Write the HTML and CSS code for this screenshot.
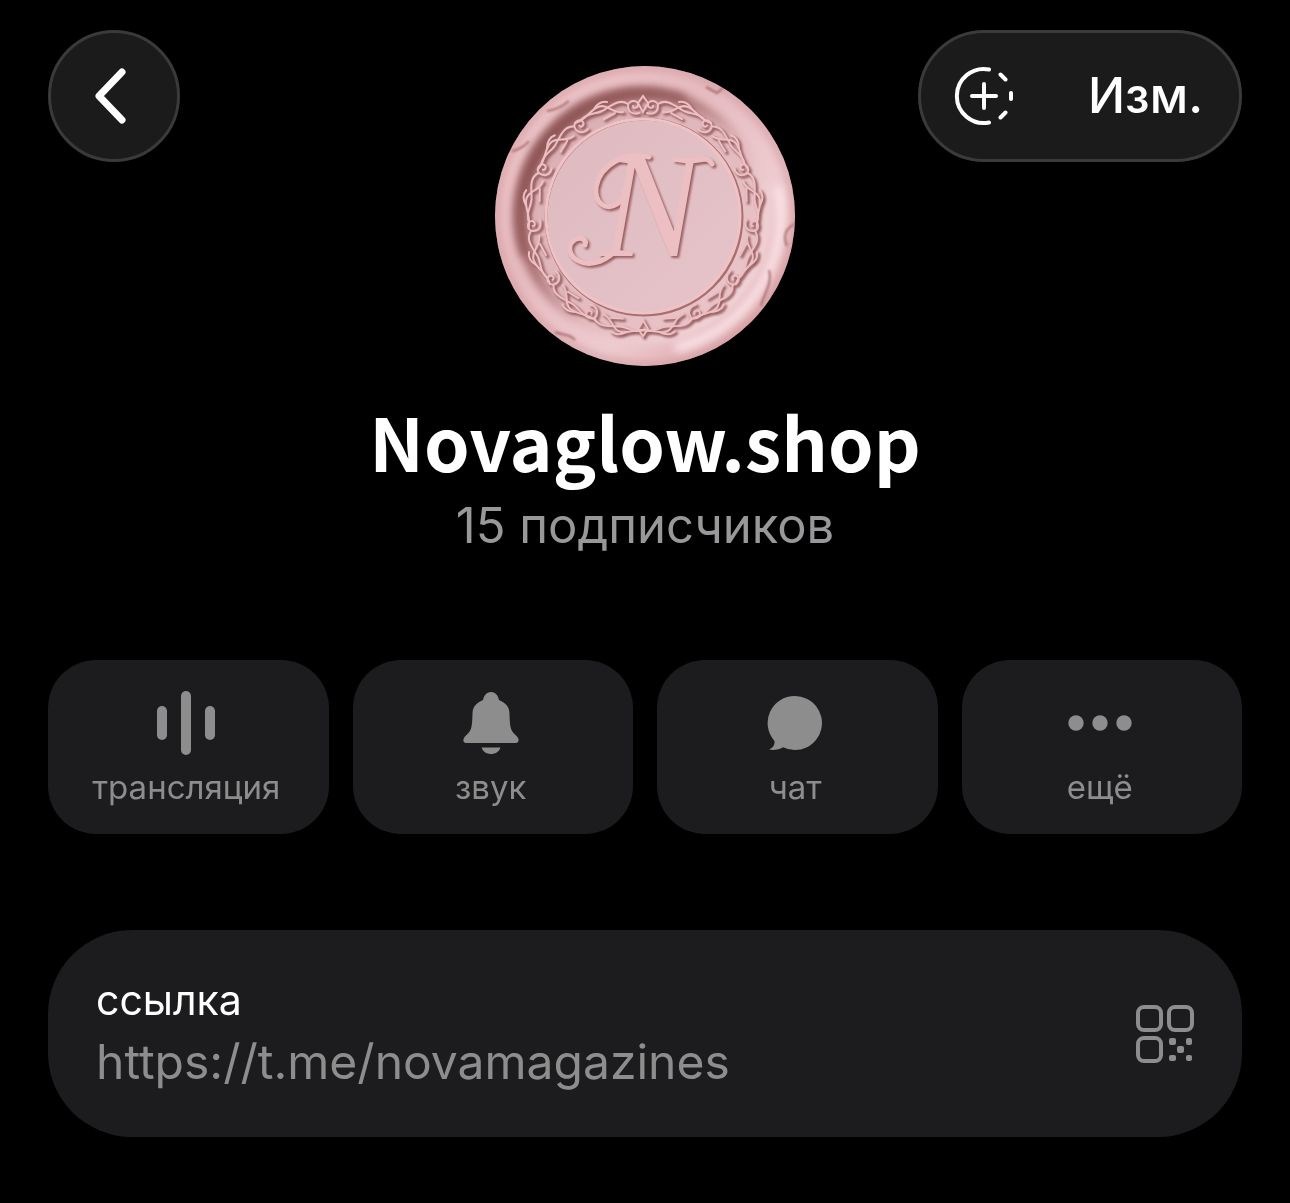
FILE: index.html
```
<!DOCTYPE html>
<html lang="ru">
	<head>
		<meta charset="UTF-8">
		<meta name="viewport" content="width=device-width, initial-scale=1">
		<title>Novaglow.shop</title>
		<link rel="stylesheet" href="styles.css">
	</head>
	<body>
		<div class="profile">
			<header class="top">
				<button type="button" class="back" aria-label="Назад">
					<svg width="60" height="60" viewBox="0 0 60 60">
						<path d="M38 6L15 30L38 54"/>
					</svg>
				</button>
				<!--аватар: сургучная печать-->
				<svg class="avatar" viewBox="0 0 300 300" role="img" aria-label="Novaglow">
					<defs>
						<linearGradient id="rim" x1="0.1" y1="0.1" x2="0.9" y2="0.9">
							<stop offset="0" stop-color="#eec6ca"/>
							<stop offset="0.35" stop-color="#e6bbc0"/>
							<stop offset="0.7" stop-color="#eecbd0"/>
							<stop offset="1" stop-color="#dba5aa"/>
						</linearGradient>
						<linearGradient id="groove" x1="0.1" y1="0.15" x2="0.9" y2="0.85">
							<stop offset="0" stop-color="#8a5050"/>
							<stop offset="0.35" stop-color="#a96f70"/>
							<stop offset="0.6" stop-color="#e2b8bc"/>
							<stop offset="1" stop-color="#fdeced"/>
						</linearGradient>
						<linearGradient id="plate" x1="0" y1="0" x2="1" y2="1">
							<stop offset="0" stop-color="#d9abb0"/>
							<stop offset="1" stop-color="#ebc9cd"/>
						</linearGradient>
						<linearGradient id="disc" x1="0" y1="0" x2="1" y2="1">
							<stop offset="0" stop-color="#debabf"/>
							<stop offset="1" stop-color="#e6c4c9"/>
						</linearGradient>
						<filter id="soft" x="-20%" y="-20%" width="140%" height="140%">
							<feGaussianBlur stdDeviation="4"/>
						</filter>
						<filter id="soft2" x="-20%" y="-20%" width="140%" height="140%">
							<feGaussianBlur stdDeviation="1"/>
						</filter>
						<clipPath id="round"><circle cx="150" cy="150" r="150"/></clipPath>
						<g id="vine">
							<path d="M144 47C138 49 133 46 133 40C133 34 143 33 143 39C143 42 138 43 138 40"/>
							<path d="M133 38C124 32 116 40 107 45C99 49 93 46 86 54"/>
							<path d="M128 46C118 48 112 37 103 41C94 45 91 54 80 57"/>
							<path d="M112 36C106 35 102 38 99 43M120 47L109 53"/>
						</g>
						<g id="half">
							<use href="#vine"/>
							<use href="#vine" transform="rotate(-30 148 150)"/>
							<use href="#vine" transform="rotate(-60 148 150)"/>
							<use href="#vine" transform="rotate(-90 148 150)"/>
							<use href="#vine" transform="rotate(-120 148 150)"/>
							<use href="#vine" transform="rotate(-147 148 150)"/>
						</g>
						<g id="wreath">
							<use href="#half"/>
							<use href="#half" transform="translate(296 0) scale(-1 1)"/>
							<path d="M143 37L148 30L153 37L148 46ZM143 263L148 270L153 263L148 254Z"/>
						</g>
						<g id="swash">
							<path d="M154 91C130 85 105 99 101 121C99 138 112 145 122 138C128 134 130 129 129 124"/>
							<path d="M123 182C112 195 98 200 86 196C73 191 71 178 81 173C87 171 92 174 90 179"/>
							<path d="M200 94C207 91 214 92 217 98"/>
						</g>
					</defs>
					<g clip-path="url(#round)">
						<rect width="300" height="300" fill="url(#rim)"/>
						<circle cx="150" cy="150" r="149" class="edge" filter="url(#soft)"/>
						<path class="glow" d="M283 120A137 137 0 0 1 180 282" filter="url(#soft)"/>
						<circle cx="147" cy="149" r="127" fill="url(#groove)" filter="url(#soft)"/>
						<circle cx="151" cy="153" r="118" fill="url(#plate)" filter="url(#soft)"/>
						<path class="shadow" d="M30 190A124 124 0 0 1 190 33" filter="url(#soft)"/>
						<path class="crack" d="M52 45C60 44 68 40 74 35M17 85C24 84 31 79 34 75M292 180C287 168 292 162 299 158M274 204C278 217 268 230 266 240M60 266C68 270 74 267 80 274M211 21L222 27L228 22" filter="url(#soft2)"/>
						<use href="#wreath" class="dark" transform="translate(2 2)" filter="url(#soft2)"/>
						<use href="#wreath" class="light"/>
						<circle cx="149" cy="151" r="98" fill="url(#disc)" class="ring-shade"/>
						<circle cx="148" cy="150" r="97" class="ring"/>
						<use href="#swash" class="dark swash" transform="translate(2 2)" filter="url(#soft2)"/>
						<text class="letter shade" x="107" y="192" filter="url(#soft2)" aria-hidden="true">N</text>
						<use href="#swash" class="light swash"/>
						<text class="letter" x="105" y="190">N</text>
					</g>
				</svg>
				<div class="tools">
					<button type="button" class="story" aria-label="Добавить историю">
						<svg width="60" height="60" viewBox="0 0 60 60">
							<path d="M35 3.5A27 27 0 1 0 35 56.5M46.500 8.500L51.500 13.500M57 27V33M46.500 51.500L51.500 46.500M30 18V42M18 30H42"/>
						</svg>
					</button>
					<button type="button" class="edit">Изм.</button>
				</div>
			</header>

			<h1 class="name">Novaglow.shop</h1>
			<p class="count">15 подписчиков</p>

			<div class="actions">
				<button type="button" class="action">
					<svg width="64" height="64" viewBox="0 0 64 64">
						<rect x="3" y="15" width="10" height="34" rx="5"/>
						<rect x="27" y="0" width="10" height="64" rx="5"/>
						<rect x="51" y="15" width="10" height="34" rx="5"/>
					</svg>
					<span>трансляция</span>
				</button>
				<button type="button" class="action">
					<svg width="64" height="64" viewBox="0 0 64 64">
						<path d="M32 1C36 1 39 4 40 9C47 12 50.500 16 50.500 23C51 36 51 39 57 44.500C61 48 60 52 57 52H7C4 52 3 48 7 44.500C13 39 13 36 13.500 23C13.500 16 17 12 24 9C25 4 28 1 32 1Z"/>
						<path d="M22.500 56.500H41.500C40 61 36 63 32 63C28 63 24 61 22.500 56.500Z"/>
					</svg>
					<span>звук</span>
				</button>
				<button type="button" class="action">
					<svg width="64" height="64" viewBox="0 0 64 64">
						<path d="M32 5A27 27 0 1 1 20 56.200C16 58.500 11 59.500 6 58.500C10 56.500 12 54 11.500 50A27 27 0 0 1 32 5Z"/>
					</svg>
					<span>чат</span>
				</button>
				<button type="button" class="action">
					<svg width="64" height="64" viewBox="0 0 64 64">
						<circle cx="8" cy="32" r="7.700"/>
						<circle cx="32" cy="32" r="7.700"/>
						<circle cx="56" cy="32" r="7.700"/>
					</svg>
					<span>ещё</span>
				</button>
			</div>

			<div class="card">
				<div class="info">
					<div class="label">ссылка</div>
					<a class="link" href="https://t.me/novamagazines">https://t.me/novamagazines</a>
				</div>
				<button type="button" class="qr" aria-label="QR-код">
					<svg width="58" height="58" viewBox="0 0 58 58">
						<g class="frames">
							<rect x="2" y="2" width="23" height="23" rx="6"/>
							<rect x="33" y="2" width="23" height="23" rx="6"/>
							<rect x="2" y="33" width="23" height="23" rx="6"/>
						</g>
						<rect x="33" y="33" width="7" height="7" rx="2"/>
						<rect x="50" y="33" width="6" height="7" rx="2"/>
						<rect x="41" y="41" width="7" height="7" rx="2"/>
						<rect x="33" y="50" width="7" height="6" rx="2"/>
						<rect x="50" y="50" width="6" height="6" rx="2"/>
					</svg>
				</button>
			</div>
		</div>
	</body>
</html>
```
FILE: styles.css
```
*{
	margin: 0px;
	padding: 0px;
	box-sizing: border-box;
}
body{
	background: #000;
	color: #fff;
	font-family: Inter, "Liberation Sans", sans-serif;
}
button{
	border: 0px;
	background: none;
	color: inherit;
	font-family: inherit;
	cursor: pointer;
}
svg{
	display: block;
}
.profile{
	padding: 30px 48px 66px;
}
/*верхняя панель*/
.top{
	display: grid;
	grid-template-columns: 1fr auto 1fr;
	align-items: start;
}
.back,.tools{
	height: 132px;
	background: #1b1b1b;
	border: 3px solid #3a3a3a;
	border-radius: 66px;
	display: flex;
	align-items: center;
}
.back{
	width: 132px;
	justify-content: center;
}
.back svg,.story svg{
	fill: none;
	stroke: #fff;
	stroke-linecap: round;
	stroke-linejoin: round;
}
.back svg{
	stroke-width: 7px;
}
.tools{
	justify-self: end;
	gap: 74px;
	padding: 0px 36px 0px 33px;
}
.story svg{
	stroke-width: 4px;
}
.edit{
	font-size: 49px;
	font-weight: 500;
	line-height: 60px;
}
/*печать*/
.avatar{
	width: 300px;
	height: 300px;
	margin-top: 36px;
}
.edge{
	fill: none;
	stroke: #cf9599;
	stroke-width: 5px;
}
.glow{
	fill: none;
	stroke: #fae3e6;
	stroke-width: 10px;
}
.shadow{
	fill: none;
	stroke: #8a5050;
	stroke-width: 8px;
	opacity: 0.7;
}
.crack{
	fill: none;
	stroke: #a96e70;
	stroke-width: 2px;
}
.dark,.light{
	fill: none;
	stroke-width: 3px;
	stroke-linecap: round;
}
.dark{
	stroke: #995f62;
}
.light{
	stroke: #ecbfc2;
	stroke-width: 2px;
}
.ring-shade{
	stroke: #a96e70;
	stroke-width: 3px;
}
.ring{
	fill: none;
	stroke: #efc3c5;
	stroke-width: 3px;
}
.swash{
	stroke-width: 5px;
}
.letter{
	font-family: "Liberation Serif", serif;
	font-style: italic;
	font-size: 150px;
	fill: #ecbfc2;
}
.shade{
	fill: #995f62;
}
/*название*/
.name{
	margin-top: 24px;
	font-family: "Noto Sans CJK SC", sans-serif;
	font-size: 73px;
	font-weight: 700;
	line-height: 100px;
	text-align: center;
}
.count{
	font-size: 49px;
	line-height: 72px;
	color: #98989a;
	text-align: center;
}
/*кнопки действий*/
.actions{
	display: grid;
	grid-template-columns: repeat(4, 1fr);
	gap: 24px;
	margin-top: 98px;
}
.action{
	height: 174px;
	padding: 4px 4px 0px 0px;
	background: #1c1c1e;
	border-radius: 48px;
	color: #8d8d8d;
	font-size: 33px;
	line-height: 40px;
	display: flex;
	flex-direction: column;
	align-items: center;
	justify-content: center;
	gap: 12px;
}
.action svg,.qr svg{
	fill: #8d8d8d;
}
/*ссылка*/
.card{
	margin-top: 96px;
	padding: 42px 48px;
	background: #1c1c1e;
	border-radius: 84px;
	display: flex;
	align-items: center;
	justify-content: space-between;
}
.label{
	font-size: 41px;
	line-height: 56px;
}
.link{
	display: block;
	font-size: 48px;
	line-height: 67px;
	color: #8d8d8d;
	text-decoration: none;
}
.qr .frames{
	fill: none;
	stroke: #8d8d8d;
	stroke-width: 4px;
}
```
